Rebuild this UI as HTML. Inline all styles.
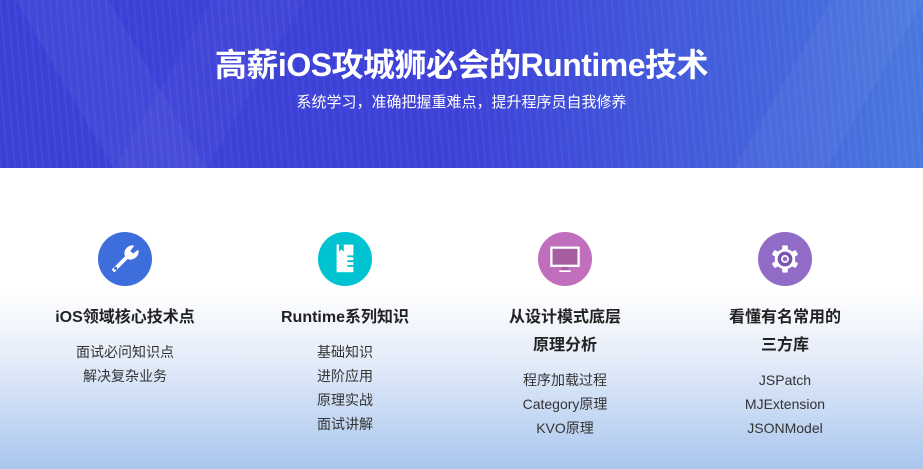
<!DOCTYPE html>
<html><head><meta charset="utf-8"><style>
*{margin:0;padding:0;box-sizing:border-box}
body{width:923px;height:469px;overflow:hidden;font-family:"Liberation Sans","Noto Sans CJK SC",sans-serif;background:linear-gradient(180deg,#fff 0,#fff 292px,#e4ecf9 360px,#a9c6ee 469px);position:relative}
.banner{position:absolute;left:0;top:0;width:923px;height:168px;background:linear-gradient(90deg,#3b41d6 0%,#3d41d8 50%,#4466dc 85%,#4a78de 100%);overflow:hidden}
.stripes{position:absolute;inset:0;background:repeating-linear-gradient(85deg,rgba(255,255,255,0.045) 0 2px,rgba(255,255,255,0) 2px 7px)}
.x1{position:absolute;left:80px;top:-60px;width:80px;height:320px;background:rgba(255,255,255,0.04);transform:rotate(-30deg)}
.x2{position:absolute;left:160px;top:-60px;width:80px;height:320px;background:rgba(255,255,255,0.03);transform:rotate(30deg)}
.x3{position:absolute;left:780px;top:-60px;width:80px;height:320px;background:rgba(255,255,255,0.04);transform:rotate(30deg)}
h1{position:absolute;left:0;width:923px;top:45px;text-align:center;color:#fff;font-size:32px;font-weight:bold;line-height:40px;letter-spacing:-0.5px}
.sub{position:absolute;left:0;width:923px;top:92px;text-align:center;color:#fff;font-size:15px;line-height:22px}
.col{position:absolute;top:232px;width:220px;text-align:center}
.ic{width:54px;height:54px;border-radius:50%;margin:0 auto;display:flex;align-items:center;justify-content:center}
.t{margin-top:18px;font-size:16px;font-weight:bold;color:#222;line-height:28px}
.it{margin-top:8px;font-size:14px;color:#333;line-height:24px}
</style></head><body>
<div class="banner"><div class="x1"></div><div class="x2"></div><div class="x3"></div><div class="stripes"></div>
<h1>高薪iOS攻城狮必会的Runtime技术</h1>
<div class="sub">系统学习，准确把握重难点，提升程序员自我修养</div></div>

<div class="col" style="left:15px"><div class="ic" style="background:#3e6ddc">
<svg width="40" height="40" viewBox="0 0 30 30"><path d="M5 23 L15 13 A6 6 0 0 1 22 5 L19 9 L21 11 L25 8 A6 6 0 0 1 17 15 L7 25 Z" fill="#fff"/><circle cx="8" cy="22" r="1.2" fill="#3e6ddc"/></svg></div>
<div class="t">iOS领域核心技术点</div><div class="it">面试必问知识点<br>解决复杂业务</div></div>

<div class="col" style="left:235px"><div class="ic" style="background:#00c3d1">
<svg width="36" height="36" viewBox="0 0 30 30"><rect x="8" y="3" width="14" height="23" fill="#fff"/><path d="M10 3h4v6l-2-2-2 2z" fill="#00c3d1"/><rect x="17" y="12" width="6" height="1.5" fill="#00c3d1"/><rect x="17" y="16" width="6" height="1.5" fill="#00c3d1"/><rect x="17" y="20" width="6" height="1.5" fill="#00c3d1"/></svg></div>
<div class="t">Runtime系列知识</div><div class="it">基础知识<br>进阶应用<br>原理实战<br>面试讲解</div></div>

<div class="col" style="left:455px"><div class="ic" style="background:#c16fbd">
<svg width="34" height="34" viewBox="0 0 30 30"><rect x="2" y="4" width="26" height="18" fill="#fff"/><rect x="4" y="6" width="22" height="14" fill="#a75ea0"/><rect x="12" y="22" width="6" height="3" fill="#a75ea0"/><rect x="10" y="25" width="10" height="1.5" fill="#fff"/></svg></div>
<div class="t">从设计模式底层<br>原理分析</div><div class="it">程序加载过程<br>Category原理<br>KVO原理</div></div>

<div class="col" style="left:675px"><div class="ic" style="background:#916cc6">
<svg width="34" height="34" viewBox="0 0 30 30"><g fill="#fff"><rect x="12.5" y="3" width="5" height="24" rx="1"/><rect x="12.5" y="3" width="5" height="24" rx="1" transform="rotate(60 15 15)"/><rect x="12.5" y="3" width="5" height="24" rx="1" transform="rotate(120 15 15)"/><circle cx="15" cy="15" r="9"/></g><circle cx="15" cy="15" r="6.5" fill="#7a55b0"/><circle cx="15" cy="15" r="3.5" fill="#fff"/><circle cx="15" cy="15" r="2" fill="#916cc6"/></svg></div>
<div class="t">看懂有名常用的<br>三方库</div><div class="it">JSPatch<br>MJExtension<br>JSONModel</div></div>
</body></html>
